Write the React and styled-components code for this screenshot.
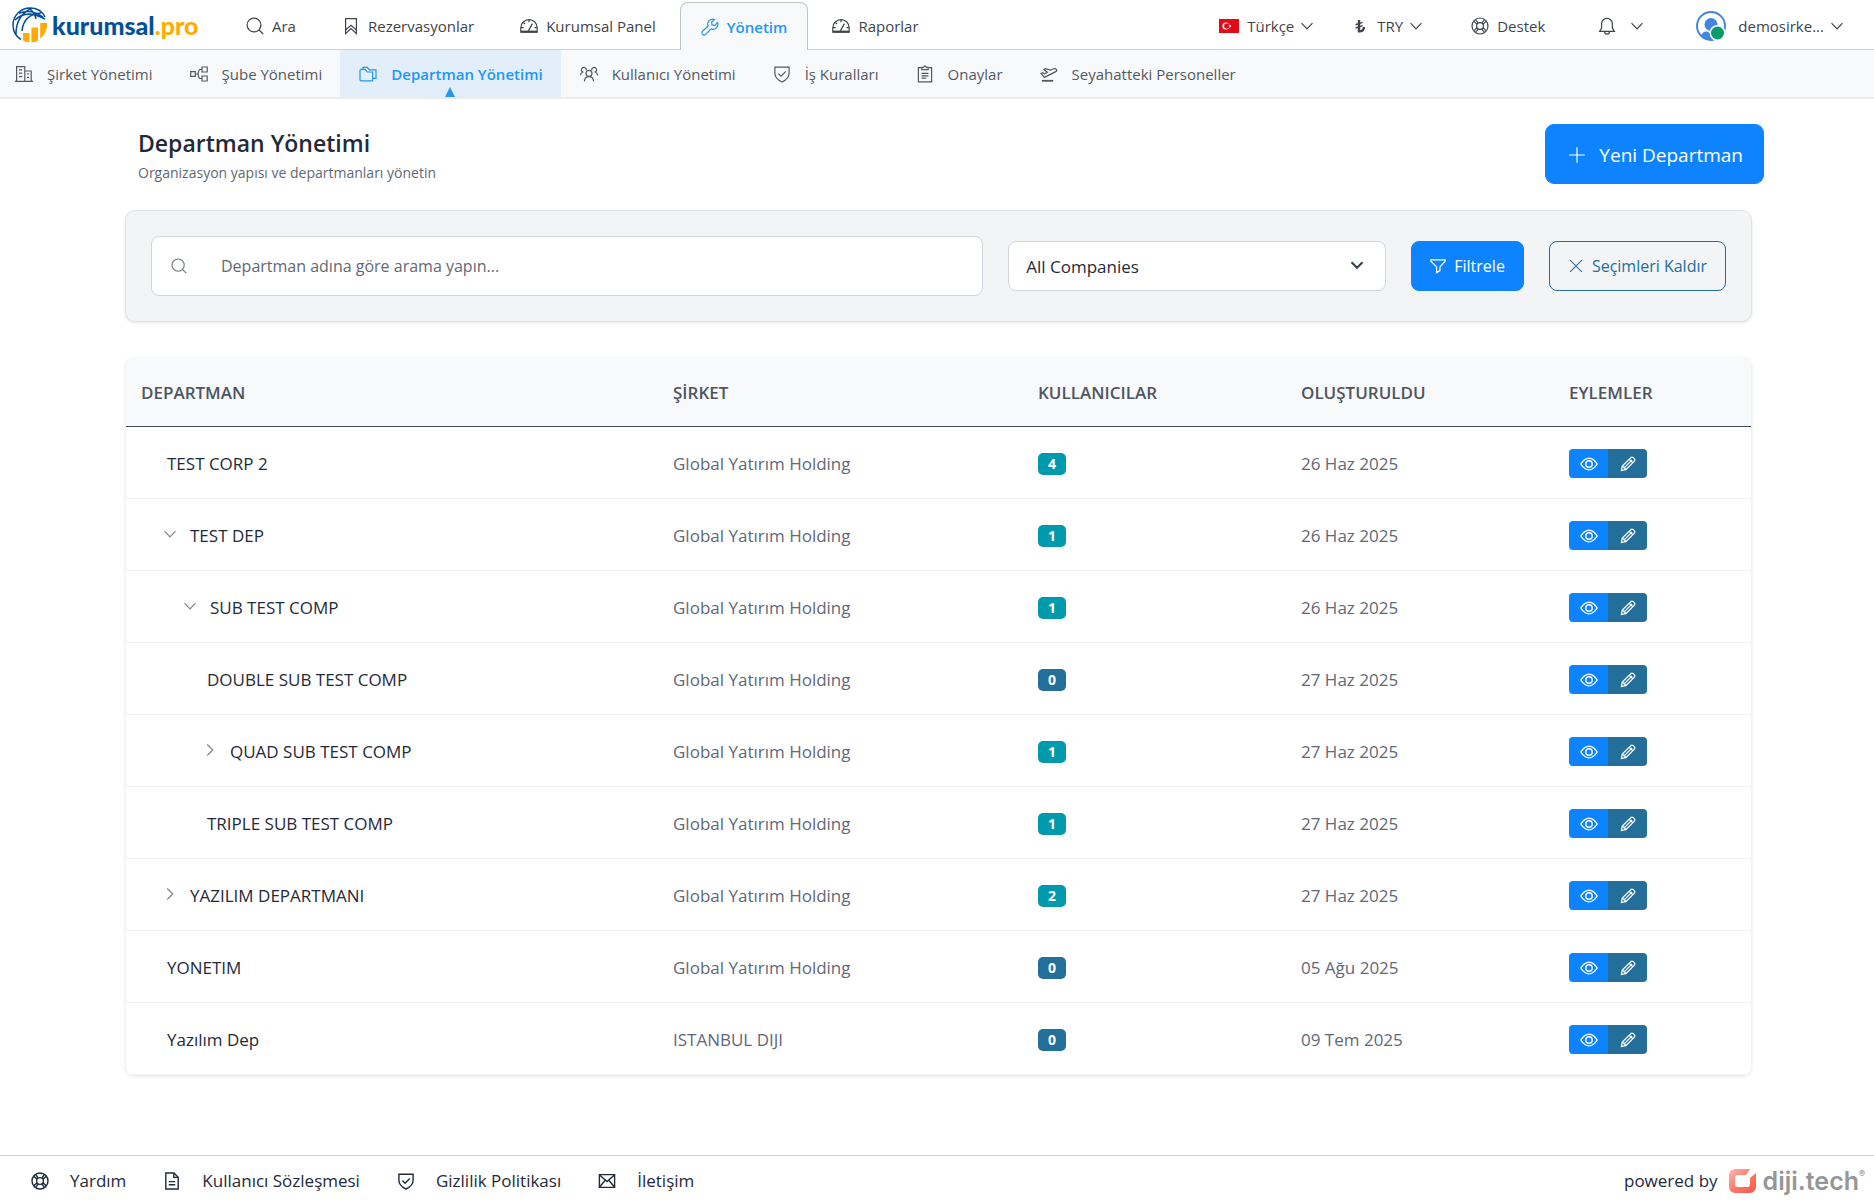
import React from "react";
import styled, { createGlobalStyle } from "styled-components";

const font = `"Open Sans", "Noto Sans", "Liberation Sans", sans-serif`;
const c = {
  ink: "#1f2a3a",
  nav: "#3f444a",
  sub: "#54595f",
  muted: "#5f6975",
  sky: "#2196f3",
  primary: "#0d83ff",
  steel: "#246f9a",
  teal: "#0099ad",
  line: "#cfd3d9",
  soft: "#f7f9fb",
};

const Global = createGlobalStyle`
  *, *::before, *::after { box-sizing: border-box; }
  body { margin: 0; background: #fff; color: ${c.ink}; font-family: ${font}; font-size: 17px; }
  button, input, select { font: inherit; }
  a { color: inherit; text-decoration: none; }
`;

/* ---------- icons ---------- */

const Svg = styled.svg`
  display: block;
  flex: none;
  fill: none;
  stroke: currentColor;
  stroke-width: ${(p) => p.$weight || 1.2};
  stroke-linejoin: miter;
`;

const shapes = {
  search: (
    <>
      <circle cx="8" cy="8" r="6.9" />
      <path d="M13 13l4.2 4" />
    </>
  ),
  bookmark: (
    <>
      <path d="M3.6 1.6h10.8v15l-5.4-5-5.4 5z" />
      <path d="M3.6 13l5.4-4.6 5.4 4.6" />
    </>
  ),
  gauge: (
    <>
      <path d="M.8 15.2v-4.4a8.2 8.2 0 0 1 16.4 0v4.4z" />
      <path d="M8 14.6l4.4-8M9 2.8v2.4M1 10.6h2.6M14.6 10.6H17M3.3 5.4l1.8 1.6" />
      <path d="M1 14.6h16" strokeWidth="2" />
    </>
  ),
  wrench: (
    <path d="M16.6 4.6a5 5 0 0 1-6.6 6.3l-5.2 5.5a2.2 2.2 0 0 1-3.2-3.2l5.5-5.2A5 5 0 0 1 13.4 1.4l-2.9 2.9.6 2.6 2.6.6zM3.3 14.7h.1" />
  ),
  life: (
    <>
      <circle cx="9" cy="9" r="8" />
      <circle cx="9" cy="9" r="3.4" />
      <path d="M2.8 4.4l3.4 2.8M4.6 2.6l2.6 3.4M13.4 2.6L10.8 6M15.2 4.4l-3.4 2.8M2.8 13.6l3.4-2.8M4.6 15.4L7.2 12M13.4 15.4L10.8 12M15.2 13.6l-3.4-2.8" />
    </>
  ),
  bell: (
    <>
      <path d="M1.6 14.4h14.8l-2-3.4V6.8a5.4 5.4 0 0 0-10.8 0V11z" />
      <path d="M6.6 14.8a2.4 2.4 0 0 0 4.8 0" />
    </>
  ),
  down: <path d="M3.5 6.2L9 11.8l5.5-5.6" />,
  right: <path d="M6.2 3.5L11.8 9l-5.6 5.5" />,
  building: (
    <>
      <path d="M1.6 16V1.6h8.2V16M9.8 6h6.4v10M0 16.4h18" />
      <path d="M4 4.8h3.2M4 8.2h3.2M4 11.6h3.2M12 9h2M12 12.4h2" />
    </>
  ),
  branch: (
    <>
      <path d="M.7 6.7h4.6v4.6H.7zM12 2h5.2v5H12zM12 11h5.2v5H12z" />
      <path d="M5.3 9h3M12 4.5H9.6L8.3 6.6v4.8l1.3 2.1H12" />
    </>
  ),
  folders: (
    <>
      <path d="M1 5.2v9.6a1 1 0 0 0 1 1h11.6V7H8.2L6.2 4.4H1.8z" />
      <path d="M4 4.2V2.4h4.4l2 2.4h6.6v8.6h-3.2" />
    </>
  ),
  people: (
    <>
      <circle cx="9" cy="8.4" r="3" />
      <path d="M4.4 16.4c.2-3 2-4.8 4.6-4.8s4.4 1.8 4.6 4.8" />
      <path d="M6.2 5.4A2.4 2.4 0 1 0 2.8 7C1.4 7.6.6 8.8.4 10.4M11.8 5.4A2.4 2.4 0 1 1 15.2 7c1.4.6 2.2 1.8 2.4 3.4" />
    </>
  ),
  shield: (
    <>
      <path d="M1.9 2.2h14.2v6c0 4-2.6 6.6-7.1 8.8-4.5-2.2-7.1-4.8-7.1-8.8z" />
      <path d="M5.4 8.6l2.6 2.6 4.8-4.8" />
    </>
  ),
  clipboard: (
    <>
      <path d="M5.6 2.6H2.4v14.2h13.2V2.6h-3.2" />
      <path d="M5.8 4.6h6.4V2.4h-1.6L9 .8 7.4 2.4H5.8zM5.6 8.4h6.8M5.6 10.8h6.8M5.6 13.2h4.6" />
    </>
  ),
  plane: (
    <>
      <path d="M1 8.4l3.4 4 11.8-6c1.6-1-.2-3.4-2.6-2.6l-2.8 1.4-5.6-1.6-1.4 1 3.6 2.6-2.8 1.6-2-1.2z" />
      <path d="M1.8 15.8h11.4" strokeWidth="1.8" />
    </>
  ),
  plus: <path d="M9 1.2v15.6M1.2 9h15.6" />,
  funnel: <path d="M1 2h16v1.6L11.2 10v4.2l-3.8 2.2V10L1 3.6z" />,
  cross: <path d="M2.4 2.4l13.2 13.2M15.6 2.4L2.4 15.6" />,
  eye: (
    <>
      <path d="M.8 9C3.4 4.8 6 3.2 9 3.2s5.6 1.6 8.2 5.8c-2.6 4.2-5.2 5.8-8.2 5.8S3.4 13.2.8 9z" />
      <circle cx="9" cy="9" r="3.2" />
    </>
  ),
  pencil: (
    <>
      <path d="M1.6 16.4l1-5 9.6-9.6a1.8 1.8 0 0 1 2.6 0l1.4 1.4a1.8 1.8 0 0 1 0 2.6l-9.6 9.6z" />
      <path d="M2.8 11.4l3.8 3.8M4.8 13.2l8.8-8.8M10.4 3.6l4 4" />
    </>
  ),
  doc: (
    <>
      <path d="M2.8 1h8.2l4.2 4.2V17H2.8z" />
      <path d="M10.8 1.2v4.2H15M5.8 9.6h6.4M5.8 12.8h6.4" />
    </>
  ),
  mail: (
    <>
      <path d="M1.4 2.6h15.2v12.8H1.4z" />
      <path d="M1.6 3L9 9.6 16.4 3M1.6 15l5.6-6.8M16.4 15l-5.6-6.8" />
    </>
  ),
};

const Icon = ({ name, size = 18, weight }) => (
  <Svg width={size} height={size} viewBox="0 0 18 18" $weight={weight} aria-hidden="true">
    {shapes[name]}
  </Svg>
);

const Flag = () => (
  <svg width="20" height="14" viewBox="0 0 20 14" aria-hidden="true">
    <path fill="#e30a17" d="M0 0h20v14H0z" />
    <circle cx="7" cy="7" r="3.6" fill="#fff" />
    <circle cx="7.9" cy="7" r="2.8" fill="#e30a17" />
    <path fill="#fff" d="M9.3 7l1.1-.4.1-1.2.8.9 1.1-.3-.6 1 .6 1-1.1-.3-.8.9-.1-1.2z" />
  </svg>
);

const Lira = () => (
  <svg width="18" height="14" viewBox="0 0 18 14" fill="none" stroke="currentColor" aria-hidden="true">
    <path d="M8 1v11.4c3.4 0 5-1.4 5-4.4" strokeWidth="2.4" />
    <path d="M4.6 5.8l7-2.4M4.6 9l7-2.4" strokeWidth="1.5" />
  </svg>
);

const Avatar = () => (
  <svg width="30" height="30" viewBox="0 0 30 30" aria-hidden="true">
    <circle cx="15" cy="15" r="14" fill="#fff" stroke="#4186e0" strokeWidth="2" />
    <circle cx="15" cy="13.5" r="6.5" fill="#4186e0" />
    <path fill="#4186e0" d="M5 25c1.4-3.8 4-5 6-4.4 2.6 1.6 5.4 1.6 8 0 2-.6 5 1 6 4.4a14 14 0 0 1-20 0z" />
    <circle cx="21.5" cy="22" r="8" fill="#fff" />
    <circle cx="21.5" cy="22" r="6.5" fill="#089b6c" />
  </svg>
);

const Globe = () => (
  <svg width="36" height="36" viewBox="0 0 36 36" fill="none" aria-hidden="true">
    <path
      d="M9 32.5A17 17 0 0 1 1 18C1 8.600 8.600 1 18 1c6.600 0 12.400 3.600 15 9M3 13c8-8 19-7 30-1M7 6.400c7-3 16-2 24 3.600M4 27C4 15 9 6 20 1M10 24C11 13 17 7 29 6M16 1c4 2 7 6 8 11"
      stroke="#04509b"
      strokeWidth="1.5"
    />
    <path
      fill="#ffab00"
      d="M11 26h6.4v9.2c-2.4 0-4.400-.6-6.400-1.600zM19.400 20.500H26v13.300c-2 1-4.200 1.500-6.600 1.500zM28.200 16H35c.6 6.200-2 12-6.800 15.600z"
    />
  </svg>
);

const DijiMark = () => (
  <svg width="28" height="24" viewBox="0 0 28 24" aria-hidden="true">
    <defs>
      <linearGradient id="diji" x1="0" y1="0" x2="1" y2="1">
        <stop offset="0" stopColor="#fdb7ae" />
        <stop offset="0.55" stopColor="#fb7568" />
        <stop offset="1" stopColor="#fa5747" />
      </linearGradient>
    </defs>
    <path
      fill="url(#diji)"
      d="M6 0h15l-4 6H8.500C7 6 6 7 6 8.500v7C6 17 7 18 8.500 18h10c1.500 0 2.500-1 2.500-2.500V9l6-5v14a6 6 0 0 1-6 6H6a6 6 0 0 1-6-6V6a6 6 0 0 1 6-6z"
    />
  </svg>
);

/* ---------- page frame ---------- */

const Page = styled.div`
  display: flex;
  flex-direction: column;
  min-height: 100vh;
`;

const TopBar = styled.header`
  display: flex;
  justify-content: space-between;
  height: 50px;
  border-bottom: 1px solid ${c.line};
  color: ${c.nav};
  font-size: 15px;
  white-space: nowrap;
`;

const Brand = styled.a`
  display: flex;
  align-items: center;
  gap: 4px;
  width: 224px;
  padding-left: 12px;
  color: #04509b;
  font-family: Lato, "Open Sans", sans-serif;
  font-size: 25px;
  font-weight: 900;
  line-height: 32px;
`;

const BrandAccent = styled.span`
  color: #ffab00;
`;

const Cluster = styled.div`
  display: flex;
`;

const MainNav = styled.nav`
  display: flex;
  gap: 2px;
`;

const NavLink = styled.a`
  display: flex;
  align-items: center;
  gap: 8px;
  height: 49px;
  padding: 2px 22px 0;
`;

const ActiveTab = styled(NavLink)`
  height: 48px;
  margin-top: 2px;
  padding: 0 20px;
  border: 1px solid #bfc3c8;
  border-bottom: 0;
  border-radius: 8px 8px 0 0;
  background: ${c.soft};
  color: ${c.sky};
  font-weight: 600;
`;

const Tools = styled.div`
  display: flex;
  align-items: center;
  padding: 2px 28px 0 0;
`;

const Tool = styled.button`
  display: flex;
  align-items: center;
  gap: ${(p) => p.$gap || 8}px;
  margin: 0 0 0 ${(p) => p.$space || 0}px;
  padding: 0;
  border: 0;
  background: none;
  color: inherit;
`;

const DropLabel = styled.span`
  display: flex;
  align-items: center;
  gap: 4px;
`;

const SubBar = styled.nav`
  display: flex;
  height: 49px;
  border-bottom: 2px solid #ebecee;
  background: ${c.soft};
  color: ${c.sub};
  font-size: 15px;
  white-space: nowrap;
`;

const SubLink = styled.a`
  display: flex;
  align-items: center;
  gap: 14px;
  padding: 0 18px 0 19px;

  &:first-child {
    padding-left: 15px;
  }
`;

const ActiveSubLink = styled(SubLink)`
  position: relative;
  background: #e2eefa;
  color: ${c.sky};
  font-weight: 600;

  &::after {
    content: "";
    position: absolute;
    left: 50%;
    bottom: 0;
    margin-left: -5px;
    border: 5px solid transparent;
    border-top: 0;
    border-bottom: 10px solid ${c.sky};
  }
`;

/* ---------- content ---------- */

const Content = styled.main`
  flex: 1;
  padding: 25px 122px 40px 125px;
`;

const Heading = styled.div`
  display: flex;
  justify-content: space-between;
  align-items: flex-start;
  margin-right: -12px;
  padding-left: 13px;
`;

const Title = styled.h1`
  margin: 2px 0 0;
  font-size: 23px;
  font-weight: 600;
  line-height: 34px;
`;

const Lead = styled.p`
  margin: 2px 0 0;
  color: ${c.muted};
  font-size: 14px;
  line-height: 22px;
`;

const Button = styled.button`
  display: flex;
  align-items: center;
  justify-content: center;
  gap: 8px;
  height: 50px;
  padding: 0 18px;
  border: 1px solid ${c.primary};
  border-radius: 8px;
  background: ${c.primary};
  color: #fff;
  font-size: 16px;
  white-space: nowrap;
`;

const NewButton = styled(Button)`
  gap: 13px;
  height: 60px;
  padding: 2px 20px 0 22px;
  border-radius: 9px;
  font-size: 19px;
`;

const OutlineButton = styled(Button)`
  border-color: ${c.steel};
  background: transparent;
  color: ${c.steel};
`;

const Filters = styled.form`
  display: flex;
  align-items: center;
  gap: 25px;
  margin-top: 26px;
  padding: 25px;
  border: 1px solid #dfe3e7;
  border-radius: 10px;
  background: #f2f4f6;
  box-shadow: 0 1px 3px rgba(0, 0, 0, 0.1);
`;

const SearchBox = styled.label`
  display: flex;
  flex: 1;
  align-items: center;
  gap: 34px;
  height: 60px;
  padding: 0 19px;
  border: 1px solid #d1d5dc;
  border-radius: 8px;
  background: #fff;
  color: #6b7482;
`;

const SearchInput = styled.input`
  flex: 1;
  min-width: 0;
  padding: 0;
  border: 0;
  outline: 0;
  background: none;
  color: ${c.ink};
  font-size: 16px;

  &::placeholder {
    color: ${c.muted};
    opacity: 1;
  }
`;

const SelectBox = styled.div`
  position: relative;
  width: 378px;
`;

const Select = styled.select`
  width: 100%;
  height: 50px;
  padding: 0 48px 0 17px;
  border: 1px solid #d1d5dc;
  border-radius: 8px;
  appearance: none;
  background: #fff;
  color: ${c.ink};
`;

const SelectArrow = styled.span`
  position: absolute;
  top: 15px;
  right: 20px;
  color: #36404d;
  pointer-events: none;
`;

/* ---------- table ---------- */

const Card = styled.section`
  margin: 36px 1px 0;
  overflow: hidden;
  border-radius: 8px;
  box-shadow: 0 1px 4px rgba(0, 0, 0, 0.12);
`;

const Table = styled.table`
  width: 100%;
  border-collapse: separate;
  border-spacing: 0;
  table-layout: fixed;
`;

const Col = styled.col`
  width: ${(p) => p.$width};
`;

const Th = styled.th`
  height: 69px;
  padding: 0 15px;
  border-bottom: 1px solid #3f4856;
  background: ${c.soft};
  color: #4d5561;
  font-size: 17px;
  font-weight: 600;
  text-align: left;
`;

const Td = styled.td`
  height: 72px;
  padding: 2px 15px 0;
  border-bottom: 1px solid #f0f1f3;
  color: ${c.muted};
`;

const Name = styled.div`
  display: flex;
  align-items: center;
  gap: 11px;
  padding-left: ${(p) => p.$depth * 20 + (p.$leaf ? 26 : 20)}px;
  color: ${c.ink};
`;

const Toggle = styled.button`
  width: 18px;
  padding: 0 0 4px;
  border: 0;
  background: none;
  color: #7b8490;
`;

const Badge = styled.span`
  display: block;
  width: 28px;
  border-radius: 5px;
  background: ${(p) => (p.$empty ? c.steel : c.teal)};
  color: #fff;
  font-size: 14px;
  font-weight: 700;
  line-height: 22px;
  text-align: center;
`;

const Actions = styled.div`
  display: flex;
  width: 78px;
  overflow: hidden;
  border-radius: 4px;
`;

const Action = styled.button`
  display: grid;
  flex: 1;
  place-items: center;
  height: 29px;
  padding: 0;
  border: 0;
  background: ${(p) => (p.$edit ? c.steel : c.primary)};
  color: #fff;
`;

/* ---------- footer ---------- */

const Footer = styled.footer`
  display: flex;
  justify-content: space-between;
  align-items: center;
  height: 47px;
  padding: 3px 9px 0 31px;
  border-top: 1px solid ${c.line};
  white-space: nowrap;
`;

const FooterLinks = styled.nav`
  display: flex;
  gap: 37px;
`;

const FooterLink = styled.a`
  display: flex;
  align-items: center;
  gap: 21px;
`;

const Powered = styled.div`
  display: flex;
  align-items: center;
  gap: 11px;
`;

const Diji = styled.a`
  display: flex;
  align-items: center;
  gap: 6px;
  color: #969696;
  font-family: Inter, "Open Sans", sans-serif;
  font-size: 25px;
  font-weight: 600;
  line-height: 26px;
`;

const Mark = styled.sup`
  align-self: flex-start;
  margin-left: -6px;
  font-size: 9px;
  line-height: 12px;
`;

/* ---------- data ---------- */

const subLinks = [
  ["building", "Şirket Yönetimi"],
  ["branch", "Şube Yönetimi"],
  ["folders", "Departman Yönetimi", true],
  ["people", "Kullanıcı Yönetimi"],
  ["shield", "İş Kuralları"],
  ["clipboard", "Onaylar"],
  ["plane", "Seyahatteki Personeller"],
];

const mainLinks = [
  ["search", "Ara"],
  ["bookmark", "Rezervasyonlar"],
  ["gauge", "Kurumsal Panel"],
  ["wrench", "Yönetim", true],
  ["gauge", "Raporlar"],
];

const GYH = "Global Yatırım Holding";
const rows = [
  { name: "TEST CORP 2", depth: 0, company: GYH, users: 4, date: "26 Haz 2025" },
  { name: "TEST DEP", depth: 0, toggle: "down", company: GYH, users: 1, date: "26 Haz 2025" },
  { name: "SUB TEST COMP", depth: 1, toggle: "down", company: GYH, users: 1, date: "26 Haz 2025" },
  { name: "DOUBLE SUB TEST COMP", depth: 2, company: GYH, users: 0, date: "27 Haz 2025" },
  { name: "QUAD SUB TEST COMP", depth: 2, toggle: "right", company: GYH, users: 1, date: "27 Haz 2025" },
  { name: "TRIPLE SUB TEST COMP", depth: 2, company: GYH, users: 1, date: "27 Haz 2025" },
  { name: "YAZILIM DEPARTMANI", depth: 0, toggle: "right", company: GYH, users: 2, date: "27 Haz 2025" },
  { name: "YONETIM", depth: 0, company: GYH, users: 0, date: "05 Ağu 2025" },
  { name: "Yazılım Dep", depth: 0, company: "ISTANBUL DIJI", users: 0, date: "09 Tem 2025" },
];

const footerLinks = [
  ["life", "Yardım"],
  ["doc", "Kullanıcı Sözleşmesi"],
  ["shield", "Gizlilik Politikası"],
  ["mail", "İletişim"],
];

export default function App() {
  return (
    <Page>
      <Global />
      <TopBar>
        <Cluster>
          <Brand href="#">
            <Globe />
            <span>
              kurumsal<BrandAccent>.pro</BrandAccent>
            </span>
          </Brand>
          <MainNav>
            {mainLinks.map(([icon, label, active]) => {
              const Item = active ? ActiveTab : NavLink;
              return (
                <Item href="#" key={label}>
                  <Icon name={icon} />
                  {label}
                </Item>
              );
            })}
          </MainNav>
        </Cluster>
        <Tools>
          <Tool>
            <Flag />
            <DropLabel>
              Türkçe
              <Icon name="down" />
            </DropLabel>
          </Tool>
          <Tool $space={35}>
            <Lira />
            <DropLabel>
              TRY
              <Icon name="down" />
            </DropLabel>
          </Tool>
          <Tool $space={46}>
            <Icon name="life" />
            Destek
          </Tool>
          <Tool $space={53} $gap={12} aria-label="Bildirimler">
            <Icon name="bell" />
            <Icon name="down" />
          </Tool>
          <Tool $space={50} $gap={12}>
            <Avatar />
            <DropLabel>
              demosirke...
              <Icon name="down" />
            </DropLabel>
          </Tool>
        </Tools>
      </TopBar>

      <SubBar>
        {subLinks.map(([icon, label, active]) => {
          const Item = active ? ActiveSubLink : SubLink;
          return (
            <Item href="#" key={label}>
              <Icon name={icon} />
              {label}
            </Item>
          );
        })}
      </SubBar>

      <Content>
        <Heading>
          <div>
            <Title>Departman Yönetimi</Title>
            <Lead>Organizasyon yapısı ve departmanları yönetin</Lead>
          </div>
          <NewButton>
            <Icon name="plus" />
            Yeni Departman
          </NewButton>
        </Heading>

        <Filters onSubmit={(e) => e.preventDefault()}>
          <SearchBox>
            <Icon name="search" size={16} />
            <SearchInput
              type="text"
              aria-label="Departman ara"
              placeholder="Departman adına göre arama yapın..."
            />
          </SearchBox>
          <SelectBox>
            <Select aria-label="Şirket">
              <option>All Companies</option>
            </Select>
            <SelectArrow>
              <Icon name="down" weight={2} />
            </SelectArrow>
          </SelectBox>
          <Button type="submit">
            <Icon name="funnel" size={16} weight={1.4} />
            Filtrele
          </Button>
          <OutlineButton type="reset">
            <Icon name="cross" size={16} />
            Seçimleri Kaldır
          </OutlineButton>
        </Filters>

        <Card>
          <Table>
            <colgroup>
              <Col $width="auto" />
              <Col $width="365px" />
              <Col $width="263px" />
              <Col $width="268px" />
              <Col $width="197px" />
            </colgroup>
            <thead>
              <tr>
                <Th>DEPARTMAN</Th>
                <Th>ŞİRKET</Th>
                <Th>KULLANICILAR</Th>
                <Th>OLUŞTURULDU</Th>
                <Th>EYLEMLER</Th>
              </tr>
            </thead>
            <tbody>
              {rows.map((row) => (
                <tr key={row.name}>
                  <Td>
                    <Name $depth={row.depth} $leaf={!row.toggle}>
                      {row.toggle && (
                        <Toggle aria-label="Alt departmanlar">
                          <Icon name={row.toggle} />
                        </Toggle>
                      )}
                      {row.name}
                    </Name>
                  </Td>
                  <Td>{row.company}</Td>
                  <Td>
                    <Badge $empty={row.users === 0}>{row.users}</Badge>
                  </Td>
                  <Td>{row.date}</Td>
                  <Td>
                    <Actions>
                      <Action aria-label="Görüntüle">
                        <Icon name="eye" weight={1.4} />
                      </Action>
                      <Action $edit aria-label="Düzenle">
                        <Icon name="pencil" size={16} weight={1.4} />
                      </Action>
                    </Actions>
                  </Td>
                </tr>
              ))}
            </tbody>
          </Table>
        </Card>
      </Content>

      <Footer>
        <FooterLinks>
          {footerLinks.map(([icon, label]) => (
            <FooterLink href="#" key={label}>
              <Icon name={icon} weight={1.4} />
              {label}
            </FooterLink>
          ))}
        </FooterLinks>
        <Powered>
          powered by
          <Diji href="#">
            <DijiMark />
            diji.tech
            <Mark>®</Mark>
          </Diji>
        </Powered>
      </Footer>
    </Page>
  );
}
